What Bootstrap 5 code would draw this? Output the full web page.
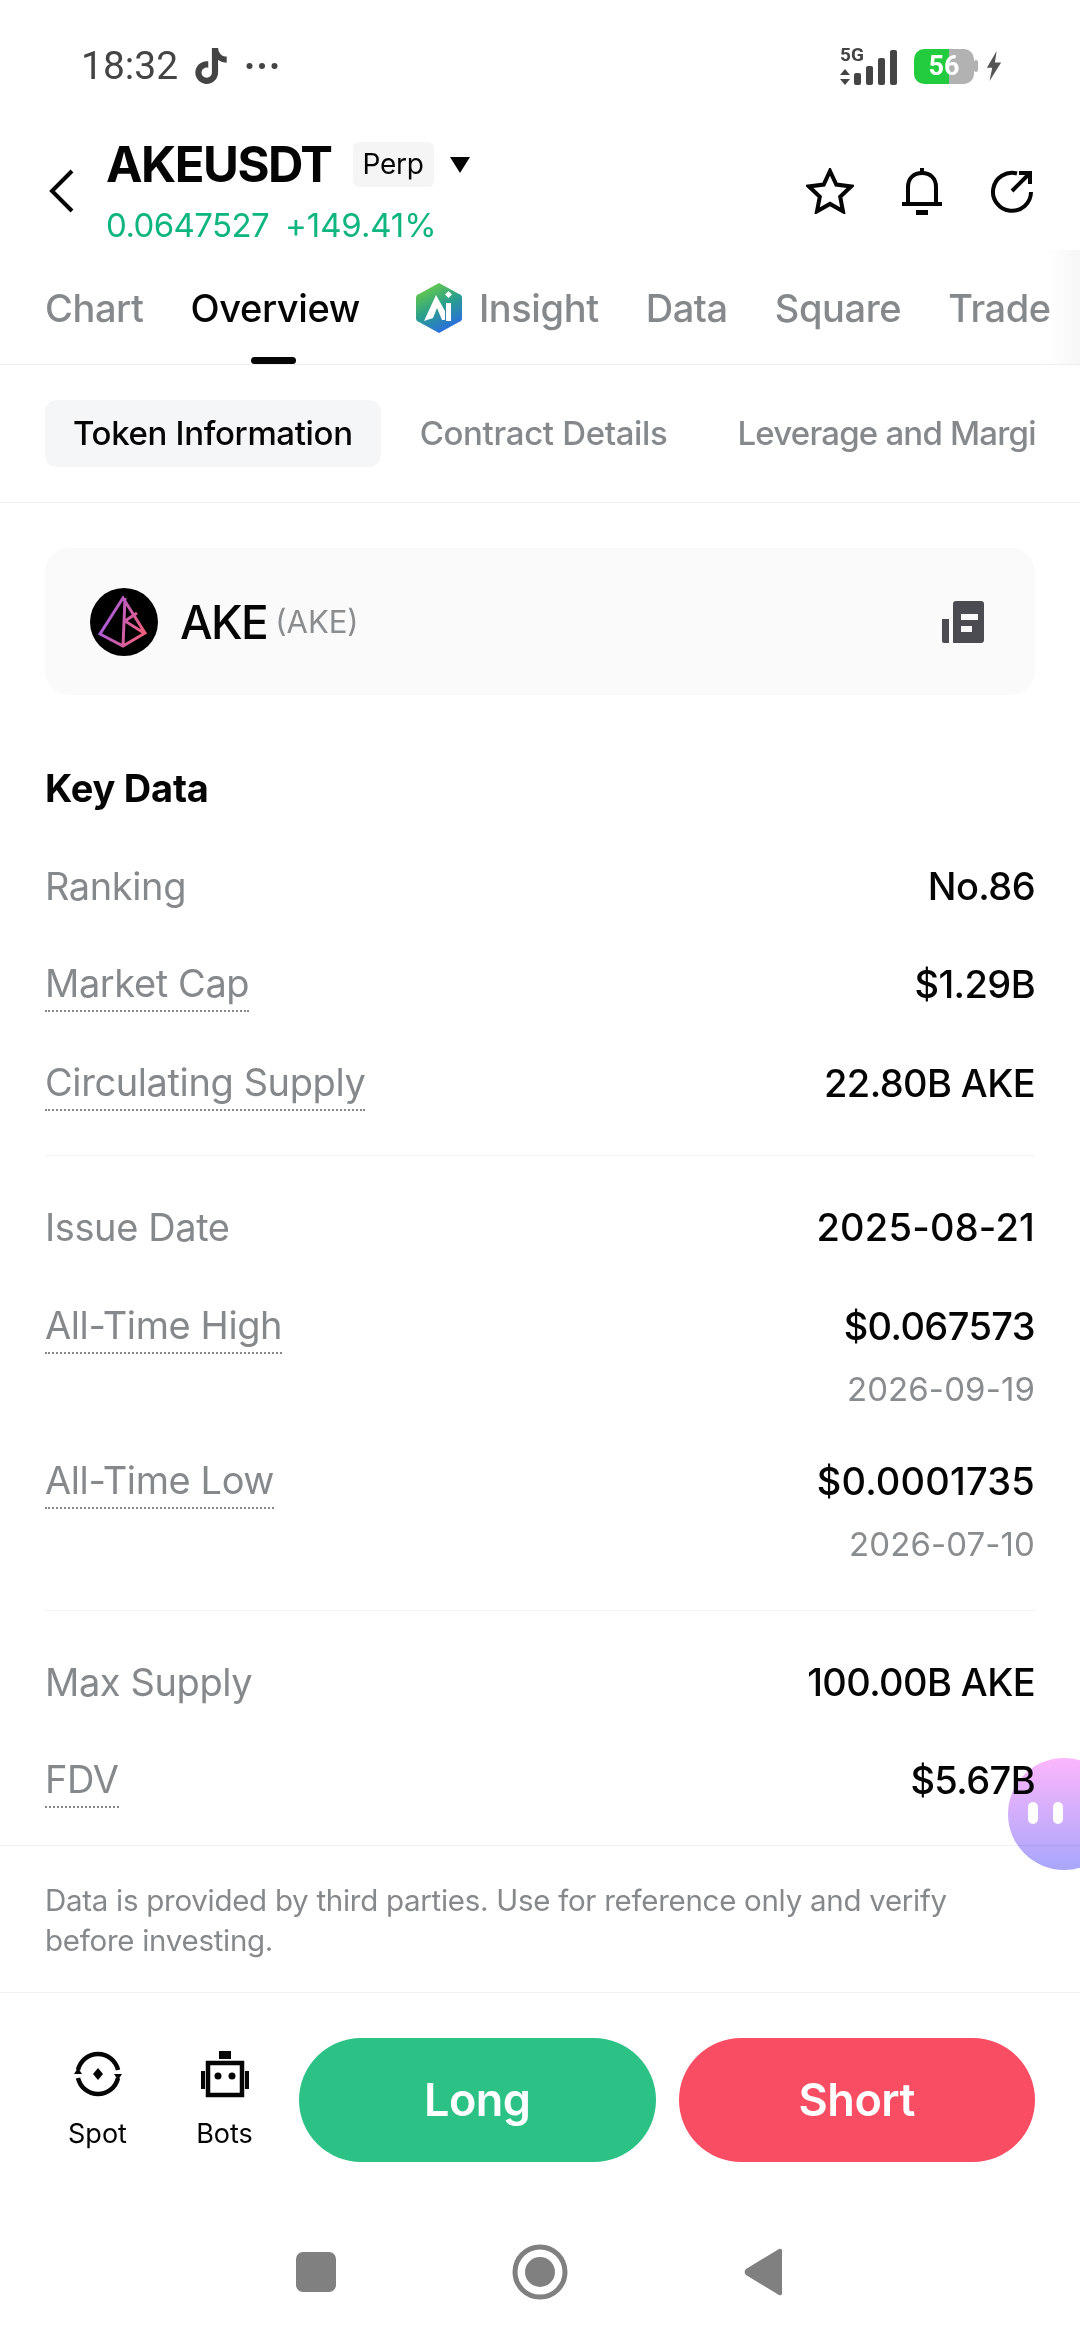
<!doctype html>
<html lang="en">
<head>
  <meta charset="utf-8">
  <meta name="viewport" content="width=device-width, initial-scale=1">
  <title>AKEUSDT Overview</title>
  <link href="https://cdn.jsdelivr.net/npm/bootstrap@5.3.0/dist/css/bootstrap.min.css" rel="stylesheet">
  <style>
    body {
      width: 1080px;
      height: 2340px;
      overflow: hidden;
      background: #fff;
      color: #050505;
      font-family: Inter, "Liberation Sans", sans-serif;
      position: relative;
    }

    .status-bar {
      height: 132px;
      padding: 0 78px 0 81px;
      color: #444;
    }

    .status-time {
      font-family: Roboto, sans-serif;
      font-size: 39px;
      line-height: 1;
    }

    .sig-icon {
      margin-top: -4px;
    }

    .batt {
      width: 60px;
      height: 35px;
      border-radius: 10px;
      background: linear-gradient(90deg, #22cc3e 58%, #b2b2b2 58%);
      color: #fff;
      font-family: Roboto, sans-serif;
      font-weight: 700;
      font-size: 27px;
      line-height: 35px;
      text-align: center;
    }

    .pair-head {
      height: 118px;
      padding-left: 47px;
      padding-right: 46px;
    }

    .pair-name {
      font-size: 49px;
      font-weight: 700;
      line-height: 56px;
      letter-spacing: -1.5px;
    }

    .perp-chip {
      background: #f5f5f5;
      border-radius: 6px;
      font-size: 28px;
      line-height: 45px;
      padding: 0 10px;
      margin-left: 21px;
      letter-spacing: -.3px;
    }

    .pair-price {
      color: #0fb57e;
      font-size: 33px;
      line-height: 42px;
      letter-spacing: -.6px;
      margin-top: 11px;
    }

    .price-pct {
      letter-spacing: -.1px;
    }

    .main-tabs {
      height: 115px;
      padding-left: 45px;
      padding-top: 2px;
      gap: 47px;
      border-bottom: 1px solid #f0f1f2;
      font-size: 38px;
      font-weight: 500;
      color: #86898c;
      white-space: nowrap;
      overflow: hidden;
      position: relative;
      letter-spacing: -.4px;
    }

    .main-tabs .on {
      color: #050505;
      position: relative;
    }

    .main-tabs .on::after {
      content: "";
      position: absolute;
      left: 60px;
      bottom: -27px;
      width: 45px;
      height: 7px;
      border-radius: 4px;
      background: #050505;
    }

    .tab-fade {
      position: absolute;
      right: 0;
      top: 0;
      bottom: 0;
      width: 34px;
      background: linear-gradient(90deg, rgba(248, 248, 248, 0), #f7f7f7);
    }

    .sub-tabs {
      height: 137px;
      margin-left: 45px;
      margin-right: 45px;
      gap: 39px;
      font-size: 33px;
      font-weight: 500;
      color: #86898c;
      white-space: nowrap;
      overflow: hidden;
      letter-spacing: -.35px;
    }

    .sub-tabs .on {
      background: #f5f6f7;
      color: #050505;
      border-radius: 12px;
      padding: 0 28px;
      line-height: 67px;
    }

    .sub-tabs .far {
      margin-left: 31px;
      letter-spacing: -.8px;
    }

    .rule-line {
      height: 1px;
      background: #f0f1f2;
    }

    .token-card {
      margin: 45px 45px 0;
      height: 147px;
      padding: 0 51px 0 45px;
      border-radius: 24px;
      background: #fafafa;
    }

    .token-name {
      font-size: 46px;
      font-weight: 500;
      line-height: 1;
      letter-spacing: -1.6px;
      margin-left: 22px;
    }

    .token-sym {
      font-size: 31px;
      color: #8a8d90;
      line-height: 1;
    }

    .key-title {
      margin: 69px 45px 25px;
      font-size: 38px;
      font-weight: 700;
      line-height: 48px;
      letter-spacing: -.2px;
    }

    .data-row {
      min-height: 98.4px;
      padding: 0 45px;
      font-size: 38px;
      font-weight: 500;
      line-height: 50px;
      padding-top: 24px;
      letter-spacing: -.6px;
    }

    .data-row .lbl {
      color: #86898c;
      font-weight: 400;
      letter-spacing: -.4px;
    }

    .data-row .lbl.tip {
      border-bottom: 2px dotted #86898c;
      line-height: 48px;
      height: 53px;
    }

    .num-wide {
      letter-spacing: .2px;
    }

    .data-sub {
      color: #8a8d90;
      font-size: 33px;
      font-weight: 400;
      line-height: 42px;
      margin-top: 17px;
      letter-spacing: .1px;
    }

    .row-tall {
      min-height: 155px;
    }

    .row-last {
      min-height: 114px;
    }

    .split-line {
      height: 1px;
      background: #f2f3f4;
      margin: 23px 45px 22px;
    }

    .note-text {
      padding: 34px 45px 0;
      height: 146px;
      color: #86898c;
      font-size: 29.5px;
      line-height: 40px;
      letter-spacing: -.28px;
    }

    .action-bar {
      padding: 45px 45px 0;
      height: 211px;
    }

    .tool-group {
      padding-top: 12px;
      margin-left: -11px;
    }

    .tool-item {
      width: 127px;
      font-size: 27px;
      line-height: 34px;
    }

    .tool-item svg {
      display: block;
      margin: 0 auto 19px;
    }

    .trade-group {
      margin-left: 11px;
      gap: 23px;
    }

    .trade-btn {
      flex: 1;
      height: 124px;
      border-radius: 62px;
      color: #fff;
      font-size: 45px;
      font-weight: 600;
      line-height: 124px;
      text-align: center;
      letter-spacing: -.5px;
    }

    .btn-long {
      background: #2dc285;
    }

    .btn-short {
      background: #f94d63;
    }

    .nav-keys {
      padding-top: 40px;
      padding-right: 2px;
      gap: 176px;
    }

    .chat-bubble {
      position: absolute;
      left: 1008px;
      top: 1758px;
      width: 112px;
      height: 112px;
      border-radius: 50%;
      background: linear-gradient(180deg, #fcb6fc, #a8a6fb);
      mix-blend-mode: multiply;
    }

    .chat-eye {
      position: absolute;
      top: 44px;
      width: 10px;
      height: 22px;
      border-radius: 5px;
      background: #fff;
    }

    .eye-a {
      left: 20px;
    }

    .eye-b {
      left: 45px;
    }
  </style>
</head>
<body>
  <div class="status-bar d-flex align-items-center justify-content-between">
    <div class="d-flex align-items-center">
      <span class="status-time">18:32</span>
      <svg class="ms-3" width="36" height="40" viewBox="3.5 2.5 18 19"><path fill="#444" d="M16.6 5.82s.51.5 0 0A4.278 4.278 0 0 1 15.54 3h-3.09v12.4a2.592 2.592 0 0 1-2.59 2.5c-1.42 0-2.6-1.16-2.6-2.6c0-1.72 1.66-3.01 3.37-2.48V9.66c-3.45-.46-6.47 2.22-6.47 5.64c0 3.33 2.76 5.7 5.69 5.7c3.14 0 5.69-2.55 5.69-5.7V9.01a7.35 7.35 0 0 0 4.3 1.38V7.3s-1.88.09-3.24-1.48"/></svg>
      <svg class="ms-3" width="32" height="8" viewBox="0 0 32 8"><circle cx="3.5" cy="4" r="3" fill="#444"/><circle cx="16" cy="4" r="3" fill="#444"/><circle cx="28.5" cy="4" r="3" fill="#444"/></svg>
    </div>
    <div class="d-flex align-items-center">
      <svg class="sig-icon" width="58" height="44" viewBox="0 -8 58 44">
        <text x="0" y="11" font-family="Roboto, sans-serif" font-weight="700" font-size="19" fill="#444">5G</text>
        <path fill="#444" d="M5 19l5 6H0zM5 35l5-6H0z"/>
        <rect x="14" y="23" width="7" height="12" rx="2" fill="#444"/>
        <rect x="26" y="16" width="7" height="19" rx="2" fill="#444"/>
        <rect x="38" y="8" width="7" height="27" rx="2" fill="#444"/>
        <rect x="50" y="0" width="7" height="35" rx="2" fill="#444"/>
      </svg>
      <div class="batt ms-3">56</div>
      <svg width="4" height="12" viewBox="0 0 4 12"><rect width="4" height="12" rx="2" fill="#b2b2b2"/></svg>
      <svg class="ms-2" width="16" height="32" viewBox="0 0 18 34"><path fill="#555" d="M12 0L1 19h6L4 34l13-21h-7z"/></svg>
    </div>
  </div>

  <div class="pair-head d-flex align-items-center justify-content-between">
    <div class="d-flex align-items-center">
      <svg width="28" height="46" viewBox="0 0 28 46"><path d="M25 3L5 23l20 20" fill="none" stroke="#050505" stroke-width="4"/></svg>
      <div style="margin-left:31px">
        <div class="d-flex align-items-center">
          <span class="pair-name">AKEUSDT</span>
          <span class="perp-chip">Perp</span>
          <svg class="ms-3" width="20" height="18" viewBox="0 0 20 18"><path d="M0 1h20L10 17z" fill="#050505"/></svg>
        </div>
        <div class="pair-price d-flex gap-3"><span>0.0647527</span><span class="price-pct">+149.41%</span></div>
      </div>
    </div>
    <div class="d-flex align-items-center" style="gap:46px">
      <svg width="48" height="46" viewBox="0 0 48 46"><path d="M24 3l6.3 13.6 14.7 1.9-10.8 10.2 2.8 14.6L24 35.9l-13 7.4 2.8-14.6L3 18.5l14.7-1.9z" fill="none" stroke="#050505" stroke-width="4"/></svg>
      <svg width="44" height="48" viewBox="0 0 44 48"><path d="M8 36V20C8 11 14 6 22 6s14 5 14 14v16M2 37h40" fill="none" stroke="#050505" stroke-width="4"/><path d="M20 1h4v5h-4zM16 43h12v5H16z" fill="#050505"/></svg>
      <svg width="44" height="44" viewBox="0 0 44 44"><path d="M27 4.500A19 19 0 1 0 41 23" fill="none" stroke="#050505" stroke-width="4"/><path d="M22 22L39 5M29 4h11v11" fill="none" stroke="#050505" stroke-width="4"/></svg>
    </div>
  </div>

  <div class="main-tabs d-flex align-items-center">
    <span>Chart</span>
    <span class="on">Overview</span>
    <span class="d-flex align-items-center ms-2">
      <svg class="me-3" width="48" height="52" viewBox="0 0 48 52">
        <defs><linearGradient id="aiGrad" x1="0.2" y1="0" x2="0.7" y2="1"><stop offset="0" stop-color="#6fd13f"/><stop offset=".5" stop-color="#2a9f8c"/><stop offset="1" stop-color="#2a68e8"/></linearGradient></defs>
        <path d="M24 1l20 11a4 4 0 0 1 3 4v20a4 4 0 0 1-3 4L24 51 4 40a4 4 0 0 1-3-4V16a4 4 0 0 1 3-4z" fill="url(#aiGrad)"/>
        <path d="M21 13L9 39l9-3 4-10 5 12h3V29z" fill="#fff"/>
        <path d="M31 21h5v18h-5zM33.500 9l3.500 3.500-3.500 3.500-3.500-3.500z" fill="#fff"/>
      </svg>
      Insight
    </span>
    <span>Data</span>
    <span>Square</span>
    <span>Trade</span>
    <div class="tab-fade"></div>
  </div>

  <div class="sub-tabs d-flex align-items-center">
    <span class="on">Token Information</span>
    <span>Contract Details</span>
    <span class="far">Leverage and Margin</span>
  </div>
  <div class="rule-line"></div>

  <div class="token-card d-flex align-items-center justify-content-between">
    <div class="d-flex align-items-center">
      <svg width="68" height="68" viewBox="0 0 68 68">
        <defs><linearGradient id="akeGrad" x1="0" y1="0.4" x2="1" y2="0.8"><stop offset="0" stop-color="#a45be0"/><stop offset="1" stop-color="#f45f78"/></linearGradient></defs>
        <circle cx="34" cy="34" r="34" fill="#000"/>
        <path d="M33 10L10 46l23 12 22-13zM35 10L33 58M47 25L35 33l19 12" fill="none" stroke="url(#akeGrad)" stroke-width="3"/>
      </svg>
      <span class="token-name">AKE</span>
      <span class="token-sym ms-2">(AKE)</span>
    </div>
    <svg width="42" height="42" viewBox="0 0 42 42"><path fill="#4a4c52" d="M11 3a3 3 0 0 1 3-3h25a3 3 0 0 1 3 3v36a3 3 0 0 1-3 3H11zM0 18h7v24H2a2 2 0 0 1-2-2z"/><path fill="#fafafa" d="M19 13h17v6H19zM19 25h11v6H19z"/></svg>
  </div>

  <div class="key-title">Key Data</div>

  <div class="data-row d-flex justify-content-between"><span class="lbl">Ranking</span><span>No.86</span></div>
  <div class="data-row d-flex justify-content-between"><span class="lbl tip">Market Cap</span><span>$1.29B</span></div>
  <div class="data-row d-flex justify-content-between"><span class="lbl tip">Circulating Supply</span><span>22.80B AKE</span></div>
  <div class="split-line"></div>
  <div class="data-row d-flex justify-content-between"><span class="lbl">Issue Date</span><span class="num-wide">2025-08-21</span></div>
  <div class="data-row row-tall d-flex justify-content-between"><span class="lbl tip">All-Time High</span><div class="text-end"><div>$0.067573</div><div class="data-sub">2026-09-19</div></div></div>
  <div class="data-row row-tall d-flex justify-content-between"><span class="lbl tip">All-Time Low</span><div class="text-end"><div class="num-wide">$0.0001735</div><div class="data-sub">2026-07-10</div></div></div>
  <div class="split-line"></div>
  <div class="data-row d-flex justify-content-between"><span class="lbl">Max Supply</span><span>100.00B AKE</span></div>
  <div class="data-row row-last d-flex justify-content-between"><span class="lbl tip">FDV</span><span>$5.67B</span></div>
  <div class="rule-line"></div>

  <div class="note-text">Data is provided by third parties. Use for reference only and verify before investing.</div>
  <div class="rule-line"></div>

  <div class="action-bar d-flex align-items-start">
    <div class="tool-group d-flex align-items-start">
      <div class="tool-item text-center">
        <svg width="48" height="48" viewBox="0 0 48 48"><path d="M4 20A20.500 20.500 0 0 1 44 20M44 28A20.500 20.500 0 0 1 4 28" fill="none" stroke="#050505" stroke-width="4.500"/><path d="M24 18l5 6-5 6-5-6zM0 24h8l-4-6zM48 24h-8l4 6z" fill="#050505"/></svg>
        Spot
      </div>
      <div class="tool-item text-center">
        <svg width="48" height="48" viewBox="0 0 48 48"><path d="M7 13h34v32H7z" fill="none" stroke="#050505" stroke-width="4.500"/><path d="M18 1h12v8H18zM0 21h4v18H0zM44 21h4v18h-4z" fill="#050505"/><circle cx="17" cy="26" r="3.500" fill="#050505"/><circle cx="31" cy="26" r="3.500" fill="#050505"/></svg>
        Bots
      </div>
    </div>
    <div class="trade-group d-flex flex-grow-1">
      <div class="trade-btn btn-long">Long</div>
      <div class="trade-btn btn-short">Short</div>
    </div>
  </div>

  <div class="nav-keys d-flex justify-content-center align-items-center">
    <svg width="40" height="40" viewBox="0 0 40 40"><rect width="40" height="40" rx="7" fill="#808080"/></svg>
    <svg width="56" height="56" viewBox="0 0 56 56"><circle cx="28" cy="28" r="25" fill="none" stroke="#808080" stroke-width="5"/><circle cx="28" cy="28" r="15" fill="#808080"/></svg>
    <svg width="38" height="48" viewBox="0 0 38 48"><path d="M35 1a2 2 0 0 1 3 2v42a2 2 0 0 1-3 2L2 27a4 4 0 0 1 0-6z" fill="#808080"/></svg>
  </div>

  <div class="chat-bubble">
    <div class="chat-eye eye-a"></div>
    <div class="chat-eye eye-b"></div>
  </div>

  <script src="https://cdn.jsdelivr.net/npm/bootstrap@5.3.0/dist/js/bootstrap.bundle.min.js"></script>
</body>
</html>
